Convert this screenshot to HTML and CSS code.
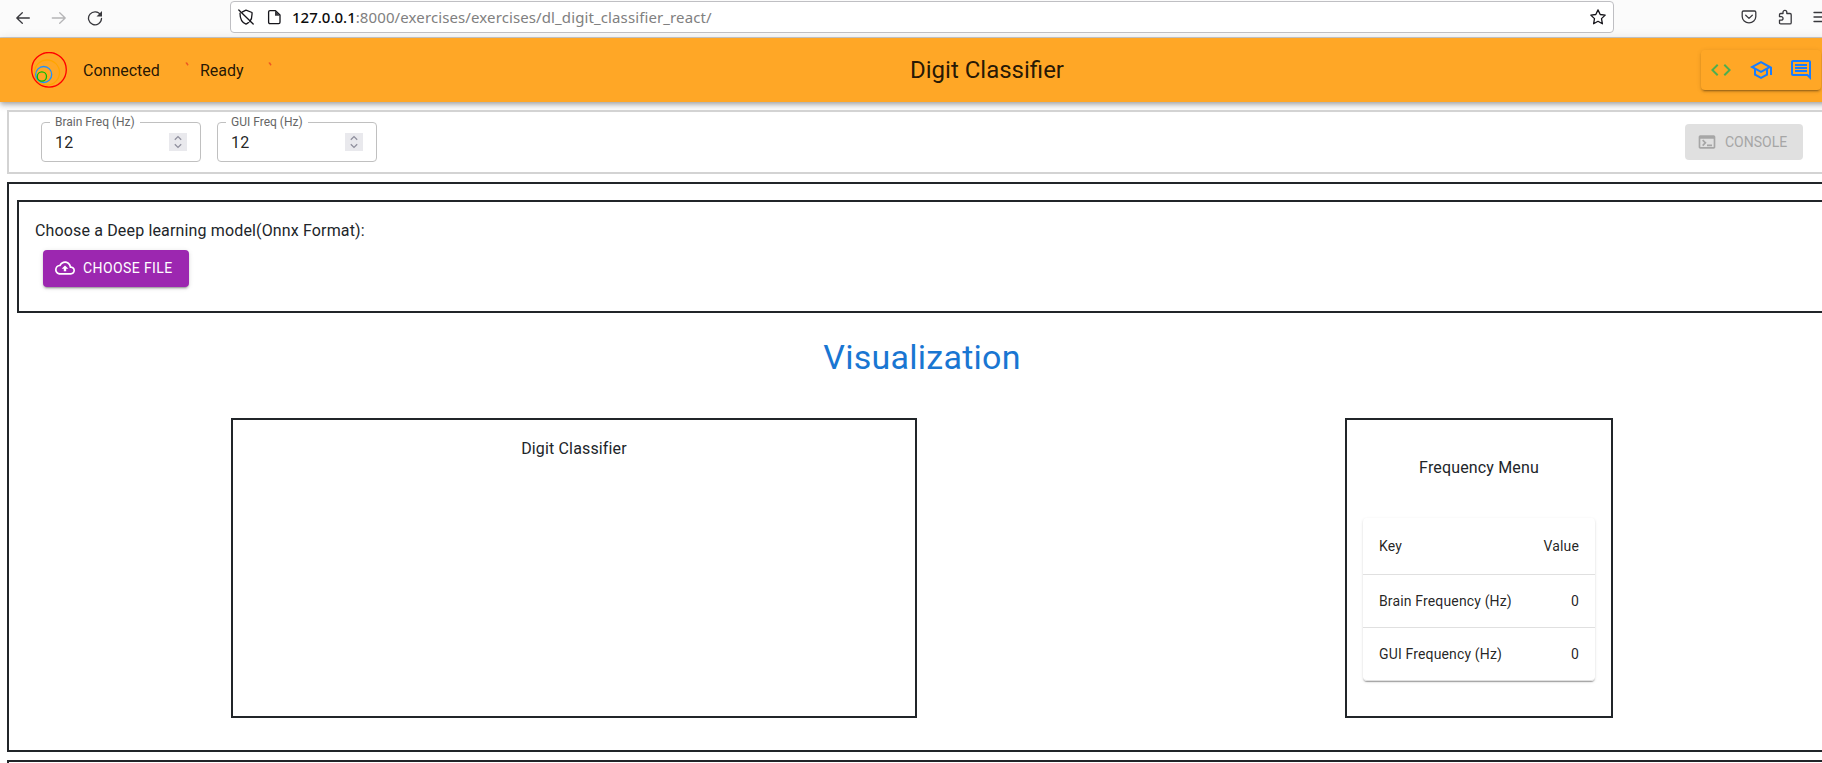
FILE: index.html
```html
<!DOCTYPE html>
<html lang="en">
<head>
<meta charset="utf-8">
<title>Digit Classifier</title>
<link rel="stylesheet" href="styles.css">
</head>
<body>
<div class="browser">
  <div class="nav">
    <svg width="16" height="16" viewBox="0 0 16 16" class="line"><path d="M14.300 8H2M7.300 2.700L1.800 8l5.500 5.300"/></svg>
    <svg width="16" height="16" viewBox="0 0 16 16" class="line dim"><path d="M1.300 8H14M8.700 2.700L14.200 8l-5.500 5.300"/></svg>
    <svg width="16" height="16" viewBox="0 0 16 16" class="line"><path d="M13.600 5A6.500 6.500 0 1 0 14.500 8.500"/><path class="solid" d="M15 1v5.500H9.500z"/></svg>
  </div>
  <div class="url">
    <svg width="16" height="16" viewBox="0 0 16 16" class="line dark"><path d="M4.500 2.900L8 1.200l6 2.300c.3 4.500-.6 7.300-2.200 9.200M2 4.200c0 5.500 1.700 9.300 6 10.900 1-.4 1.800-.9 2.500-1.500M.8 1l14.400 14"/></svg>
    <svg width="16" height="16" viewBox="0 0 16 16" class="line dark page-icon"><path d="M4 1.700h5.500L14 6v7.300q0 1.400-1.400 1.400H4q-1.400 0-1.400-1.400V3.100Q2.600 1.700 4 1.700z"/><path class="solid" d="M9 1.500V6.700h5z"/></svg>
    <span class="address"><b>127.0.0.1</b>:8000/exercises/exercises/dl_digit_classifier_react/</span>
    <svg width="16" height="16" viewBox="0 0 16 16" class="line dark star"><path d="M8 .9l2.200 4.600 5 .6-3.700 3.500.9 5.200L8 12.300l-4.400 2.500.9-5.200L.8 6.100l5-.6z"/></svg>
  </div>
  <div class="tools">
    <svg width="16" height="16" viewBox="0 0 16 16" class="line"><path d="M2.500 2h11q1.300 0 1.300 1.300V7.500a6.800 6.300 0 0 1-13.600 0V3.300Q1.200 2 2.500 2zM4.700 6.300L8 9.400l3.300-3.100"/></svg>
    <svg width="16" height="16" viewBox="0 0 16 16" class="line"><path d="M2.500 5.700q0-1.200 1.200-1.200H6V3.200a1.900 1.900 0 0 1 3.800 0v1.300H13q1.200 0 1.200 1.200v8q0 1.200-1.200 1.200H3.700q-1.200 0-1.200-1.200v-2.500h1.800a1.700 1.700 0 0 0 0-3.500H2.500z"/></svg>
    <svg width="16" height="16" viewBox="0 0 16 16" class="line"><path d="M1 3.500h14M1 8h14M1 12.500h14"/></svg>
  </div>
</div>

<header class="appbar">
  <svg class="logo" width="36" height="36" viewBox="0 0 36 36">
    <circle cx="18" cy="17.800" r="17.300" stroke="#f00"/><circle cx="16" cy="20.500" r="12.500" stroke="#ffa500"/>
    <circle cx="12.700" cy="22.500" r="8" stroke="#1e90ff"/><circle cx="10.900" cy="24.500" r="4.600" stroke="#00c000"/>
  </svg>
  <span class="status connected">Connected</span>
  <svg class="tick" width="4" height="4" viewBox="0 0 4 4"><path d="M.3.800L2 .3l1.600 2.500-1 .9z"/></svg>
  <span class="status ready">Ready</span>
  <svg class="tick" width="4" height="4" viewBox="0 0 4 4"><path d="M.3.800L2 .3l1.600 2.500-1 .9z"/></svg>
  <h1 class="title">Digit Classifier</h1>
  <div class="actions">
    <svg width="24" height="24" viewBox="0 0 24 24" fill="#4caf50"><path d="M9.400 16.600 4.800 12l4.600-4.600L8 6l-6 6 6 6 1.400-1.400zm5.200 0 4.600-4.600-4.600-4.600L16 6l6 6-6 6-1.400-1.400z"/></svg>
    <svg width="24" height="24" viewBox="0 0 24 24" fill="#177dff"><path d="M12 3 1 9l4 2.180v6L12 21l7-3.820v-6l2-1.090V17h2V9L12 3zm6.820 6L12 12.720 5.180 9 12 5.280 18.820 9zM17 15.990l-5 2.730-5-2.730v-3.720L12 15l5-2.730v3.720z"/></svg>
    <svg width="24" height="24" viewBox="0 0 24 24" fill="#177dff"><path d="M21.990 4c0-1.100-.89-2-1.990-2H4c-1.100 0-2 .9-2 2v12c0 1.100.9 2 2 2h14l4 4-.01-18zM20 4v13.170L18.830 16H4V4h16zM6 12h12v2H6zm0-3h12v2H6zm0-3h12v2H6z"/></svg>
  </div>
</header>

<section class="controls">
  <div class="field"><span class="label">Brain Freq (Hz)</span><span class="value">12</span>
    <svg class="spin" width="18" height="18" viewBox="0 0 18 18"><path d="M5.800 6.700L9 3.600l3.200 3.100M5.800 11.300L9 14.400l3.200-3.100"/></svg></div>
  <div class="field"><span class="label">GUI Freq (Hz)</span><span class="value">12</span>
    <svg class="spin" width="18" height="18" viewBox="0 0 18 18"><path d="M5.800 6.700L9 3.600l3.200 3.100M5.800 11.300L9 14.400l3.200-3.100"/></svg></div>
  <div class="button console">
    <svg width="20" height="20" viewBox="0 0 24 24"><path d="M20 4H4c-1.110 0-2 .9-2 2v12c0 1.100.89 2 2 2h16c1.100 0 2-.9 2-2V6c0-1.100-.89-2-2-2zm0 14H4V8h16v10zm-2-1h-6v-2h6v2zM7.500 17l-1.410-1.410L8.670 13l-2.590-2.590L7.500 9l4 4-4 4z"/></svg>
    <span>CONSOLE</span>
  </div>
</section>

<main class="exercise">
  <section class="model">
    <div class="prompt">Choose a Deep learning model(Onnx Format):</div>
    <div class="button choose">
      <svg width="20" height="20" viewBox="0 0 24 24"><path d="M19.350 10.040C18.670 6.590 15.640 4 12 4 9.110 4 6.600 5.640 5.350 8.040 2.340 8.360 0 10.910 0 14c0 3.310 2.690 6 6 6h13c2.760 0 5-2.240 5-5 0-2.640-2.050-4.780-4.650-4.960zM19 18H6c-2.210 0-4-1.790-4-4 0-2.050 1.530-3.760 3.560-3.970l1.070-.11.5-.95C8.080 7.140 9.940 6 12 6c2.620 0 4.880 1.860 5.390 4.430l.3 1.500 1.530.11c1.560.1 2.780 1.410 2.780 2.960 0 1.650-1.350 3-3 3zM8 13h2.550v3h2.900v-3H16l-4-4z"/></svg>
      <span>CHOOSE FILE</span>
    </div>
  </section>
  <h2 class="heading">Visualization</h2>
  <div class="panels">
    <section class="panel classifier">Digit Classifier</section>
    <section class="panel frequency">
      <div class="caption">Frequency Menu</div>
      <div class="table">
        <div class="row head"><span>Key</span><span>Value</span></div>
        <div class="row"><span>Brain Frequency (Hz)</span><span>0</span></div>
        <div class="row"><span>GUI Frequency (Hz)</span><span>0</span></div>
      </div>
    </section>
  </div>
</main>
<section class="next"></section>
</body>
</html>
```
FILE: styles.css
```css
* { box-sizing: border-box; }
html { overflow: hidden; }
body {
  margin: 0;
  width: 1844px;
  height: 763px;
  overflow: hidden;
  background: #fff;
  color: #212529;
  font: 400 16px/24px Roboto, sans-serif;
  letter-spacing: 0.15px;
}
svg { display: block; flex: none; }

.browser {
  display: flex;
  height: 38px;
  padding-top: 1px;
  background: #fbfbfb;
  border-bottom: 1px solid #ccc;
}
.nav { display: flex; gap: 20px; width: 230px; padding: 9px 0 0 15px; }
.line { fill: none; stroke: #38383d; stroke-width: 1.300; stroke-linecap: round; stroke-linejoin: round; }
.line.dim { stroke: #b5b5b7; }
.line.dark { stroke: #15141a; }
.line .solid { fill: #38383d; stroke: none; }
.url {
  display: flex;
  align-items: center;
  width: 1384px;
  height: 32px;
  padding: 0 7px;
  background: #fff;
  border: 1px solid #bfbfc3;
  border-radius: 4px;
}
.page-icon { margin-left: 12px; }
.address {
  flex: 1;
  margin-left: 10px;
  color: #808080;
  font: 400 15px/20px "Noto Sans", sans-serif;
  letter-spacing: 0.11px;
  white-space: nowrap;
}
.address b { color: #0c0c0d; font-weight: 500; letter-spacing: 0; }
.tools { display: flex; gap: 20px; padding: 8px 0 0 127px; }

.appbar {
  display: flex;
  height: 64px;
  padding-left: 31px;
  background: #ffa726;
  color: rgba(0, 0, 0, .87);
  box-shadow: 0 2px 4px -1px rgba(0,0,0,.2), 0 4px 5px rgba(0,0,0,.14), 0 1px 10px rgba(0,0,0,.12);
}
.logo { margin-top: 14px; fill: none; stroke-width: 1.300; }
.status { margin-top: 21px; letter-spacing: 0; }
.connected { width: 102px; margin-left: 16px; }
.ready { width: 68px; margin-left: 11px; }
.tick { margin-top: 24px; fill: #ee5622; }
.title { flex: 1; margin: 16px 0 0 638px; font-size: 24px; line-height: 32px; font-weight: 400; letter-spacing: 0; }
.actions {
  display: flex;
  gap: 16px;
  width: 120px;
  height: 40px;
  margin: 12px 23px 0 0;
  padding: 8px;
  border-radius: 4px;
  box-shadow: 0 3px 1px -2px rgba(0,0,0,.2), 0 2px 2px rgba(0,0,0,.14), 0 1px 5px rgba(0,0,0,.12);
}

.controls {
  display: flex;
  gap: 16px;
  width: 1830px;
  height: 64px;
  margin: 8px 0 0 7px;
  padding: 10px 32px;
  border: 2px solid #d3d3d3;
}
.field {
  position: relative;
  display: flex;
  align-items: center;
  justify-content: space-between;
  width: 160px;
  height: 40px;
  padding: 0 13px;
  border: 1px solid #c0c0c0;
  border-radius: 4px;
}
.label {
  position: absolute;
  top: -9px;
  left: 8px;
  padding: 0 5px;
  background: #fff;
  color: #666;
  font-size: 12px;
  line-height: 17px;
  letter-spacing: 0;
}
.value { padding-top: 2px; color: rgba(0, 0, 0, .87); }
.spin { background: #e9e9ed; fill: none; stroke: #8f8f9d; stroke-width: 1.300; }
.button {
  display: flex;
  align-items: center;
  gap: 8px;
  border-radius: 4px;
  font-size: 14px;
  letter-spacing: 0.4px;
}
.button svg { fill: currentColor; }
.console {
  width: 118px;
  height: 36px;
  margin: 2px 0 0 auto;
  padding-left: 12px;
  background: #e0e0e0;
  color: #a6a6a6;
  letter-spacing: 0;
}

.exercise {
  width: 1830px;
  height: 570px;
  margin: 8px 0 0 7px;
  padding: 16px 8px 0;
  border: 2px solid #212529;
}
.model { height: 113px; padding: 17px 16px 0; border: 2px solid #212529; }
.choose {
  width: 146px;
  height: 37px;
  margin: 7px 0 0 8px;
  padding: 0 0 1px 12px;
  background: #9c27b0;
  color: #fff;
  box-shadow: 0 3px 1px -2px rgba(0,0,0,.2), 0 2px 2px rgba(0,0,0,.14), 0 1px 5px rgba(0,0,0,.12);
}
.heading {
  margin: 23px 0 40px;
  color: #1976d2;
  font-size: 34px;
  line-height: 42px;
  font-weight: 400;
  letter-spacing: 0.25px;
  text-align: center;
}
.panels { display: flex; justify-content: space-around; }
.panel { height: 300px; border: 2px solid #212529; text-align: center; }
.classifier { width: 686px; padding-top: 17px; }
.frequency { width: 268px; padding: 36px 16px 0; }
.table {
  margin-top: 38px;
  border-radius: 4px;
  color: rgba(0, 0, 0, .87);
  font-size: 14px;
  box-shadow: 0 2px 1px -1px rgba(0,0,0,.2), 0 1px 1px rgba(0,0,0,.14), 0 1px 3px rgba(0,0,0,.12);
}
.row {
  display: flex;
  align-items: center;
  justify-content: space-between;
  height: 53px;
  padding: 0 16px;
  border-bottom: 1px solid #e0e0e0;
}
.row:last-child { border-radius: 0 0 4px 4px; }
.row.head { height: 57px; }
.next { width: 1830px; height: 3px; margin: 8px 0 0 7px; border: 2px solid #212529; border-bottom: 0; }
```
